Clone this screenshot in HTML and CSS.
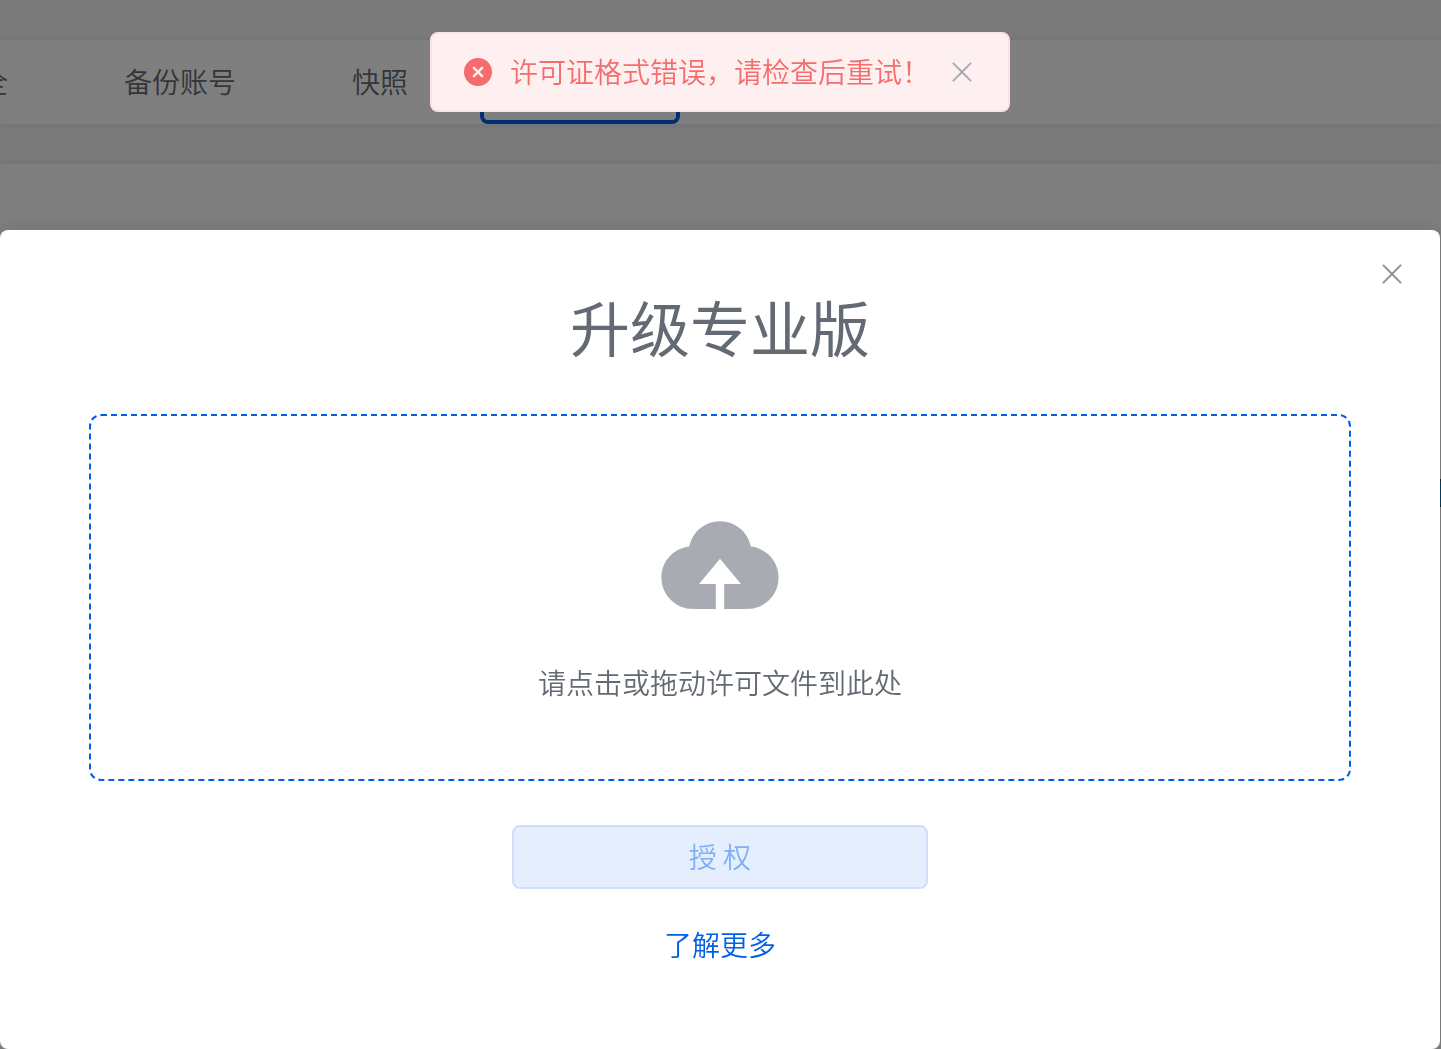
FILE: index.html
```
<!DOCTYPE html>
<html lang="zh-CN">

<head>
    <meta charset="UTF-8">
    <meta name="viewport" content="width=device-width, initial-scale=1.0">
    <title>升级专业版</title>
    <link rel="stylesheet" href="styles.css">
</head>

<body>
    <div class="page">
        <nav class="tabs card">
            <a class="tab" href="#safe">安全</a>
            <a class="tab" href="#backup">备份账号</a>
            <a class="tab" href="#snapshot">快照</a>
            <a class="tab active" href="#license" aria-label="许可证"></a>
        </nav>
        <main class="content card"></main>
        <div class="side-mark"></div>
    </div>

    <div class="overlay">
        <div class="dialog" role="dialog" aria-labelledby="dialog-title">
            <button type="button" class="icon-button dialog-close" aria-label="关闭">
                <svg class="icon" viewBox="0 0 1024 1024">
                    <path fill="currentColor" d="M764.288 214.592 512 466.88 259.712 214.592a31.936 31.936 0 0 0-45.12 45.12L466.752 512 214.528 764.224a31.936 31.936 0 1 0 45.12 45.184L512 557.184l252.288 252.288a31.936 31.936 0 0 0 45.12-45.12L557.12 512.064l252.288-252.352a31.936 31.936 0 1 0-45.12-45.184z"/>
                </svg>
            </button>
            <h2 id="dialog-title">升级专业版</h2>
            <form class="license-form">
                <label class="upload" for="license-file">
                    <input type="file" id="license-file" class="upload-input">
                    <svg class="upload-icon" viewBox="0 0 1024 1024">
                        <path fill="currentColor" d="M544 864V672h128L512 480 352 672h128v192H320v-1.6c-5.376.32-10.496 1.6-16 1.6A240 240 0 0 1 64 624c0-123.136 93.12-223.488 212.608-237.248A239.808 239.808 0 0 1 512 192a239.872 239.872 0 0 1 235.456 194.752c119.488 13.76 212.48 114.112 212.48 237.248a240 240 0 0 1-240 240c-5.376 0-10.56-1.28-16-1.6v1.6H544z"/>
                    </svg>
                    <span>请点击或拖动许可文件到此处</span>
                </label>
                <button type="submit" class="submit" disabled>授 权</button>
                <a class="more" href="#more">了解更多</a>
            </form>
        </div>
    </div>

    <div class="message-wrapper">
        <div class="message" role="alert">
            <svg class="icon" viewBox="0 0 1024 1024">
                <path fill="currentColor" d="M512 64a448 448 0 1 1 0 896 448 448 0 0 1 0-896zm0 393.664L407.936 353.6a38.4 38.4 0 1 0-54.336 54.336L457.664 512 353.6 616.064a38.4 38.4 0 1 0 54.336 54.336L512 566.336 616.064 670.4a38.4 38.4 0 1 0 54.336-54.336L566.336 512 670.4 407.936a38.4 38.4 0 1 0-54.336-54.336L512 457.664z"/>
            </svg>
            <p>许可证格式错误，请检查后重试！</p>
            <button type="button" class="icon-button" aria-label="关闭">
                <svg class="icon" viewBox="0 0 1024 1024">
                    <path fill="currentColor" d="M764.288 214.592 512 466.88 259.712 214.592a31.936 31.936 0 0 0-45.12 45.12L466.752 512 214.528 764.224a31.936 31.936 0 1 0 45.12 45.184L512 557.184l252.288 252.288a31.936 31.936 0 0 0 45.12-45.12L557.12 512.064l252.288-252.352a31.936 31.936 0 1 0-45.12-45.184z"/>
                </svg>
            </button>
        </div>
    </div>
</body>

</html>
```
FILE: styles.css
```
* {
    margin: 0;
    padding: 0;
    box-sizing: border-box;
}

body {
    font-family: "Noto Sans CJK SC", sans-serif;
    font-size: 28px;
    font-weight: 350;
    line-height: 40px;
    color: #646a73;
    background-color: #f4f4f4;
    overflow: hidden;
}

a {
    text-decoration: none;
}

.page {
    display: flex;
    flex-direction: column;
    gap: 40px;
    min-height: 100vh;
    padding-top: 40px;
}

.card {
    background-color: #ffffff;
    box-shadow: 0 0 8px rgba(0, 94, 235, 0.1);
}

.tabs {
    display: flex;
    height: 84px;
    overflow: hidden;
}

.tab {
    flex: none;
    width: 200px;
    line-height: 82px;
    text-align: center;
    color: #646a73;
}

/* the list is scrolled so the last tab is in view */
.tab:first-child {
    margin-left: -120px;
}

.tab.active {
    border: 4px solid #005eeb;
    border-radius: 8px;
}

.content {
    flex: 1;
}

.side-mark {
    position: absolute;
    top: 479px;
    right: 0;
    width: 1px;
    height: 28px;
    background-color: #0a7ac0;
    border-top: 2px solid #444444;
    border-bottom: 2px solid #444444;
}

.overlay {
    position: fixed;
    inset: 0;
    display: flex;
    padding: 230px 1px 0 0;
    background-color: rgba(0, 0, 0, 0.5);
}

.dialog {
    position: relative;
    flex: 1;
    padding: 56px 89px;
    background-color: #ffffff;
    border-radius: 8px;
    box-shadow: 0 0 24px rgba(0, 0, 0, 0.12);
}

.dialog h2 {
    margin-bottom: 48px;
    font-size: 60px;
    font-weight: 400;
    line-height: 80px;
    text-align: center;
}

.icon {
    display: block;
    flex: none;
    width: 32px;
    height: 32px;
}

.icon-button {
    border: none;
    background: none;
    color: #a8abb2;
    cursor: pointer;
}

.dialog-close {
    position: absolute;
    top: 28px;
    right: 32px;
    color: #909399;
}

.license-form {
    display: flex;
    flex-direction: column;
    align-items: center;
}

.upload {
    display: flex;
    flex-direction: column;
    align-items: center;
    gap: 32px;
    width: 100%;
    padding: 80px 20px 77px;
    border: 2px dashed #005eeb;
    border-radius: 12px;
    cursor: pointer;
}

.upload-input {
    position: absolute;
    width: 1px;
    height: 1px;
    opacity: 0;
}

.upload-icon {
    width: 134px;
    height: 134px;
    color: #a8abb2;
}

.submit {
    width: 33%;
    height: 64px;
    margin: 44px 0 35px;
    padding-bottom: 2px;
    border: 2px solid #ccdffb;
    border-radius: 8px;
    background-color: #e5eefd;
    color: #80aff5;
    font: inherit;
}

.more {
    color: #005eeb;
}

.message-wrapper {
    position: fixed;
    inset: 32px 1px auto 0;
    display: flex;
    justify-content: center;
}

.message {
    display: flex;
    align-items: center;
    gap: 16px;
    height: 80px;
    padding: 0 30px;
    border: 2px solid #fde2e2;
    border-radius: 8px;
    background-color: #fef0f0;
    color: #f56c6c;
    white-space: nowrap;
}

.message p {
    padding-bottom: 2px;
}
```
